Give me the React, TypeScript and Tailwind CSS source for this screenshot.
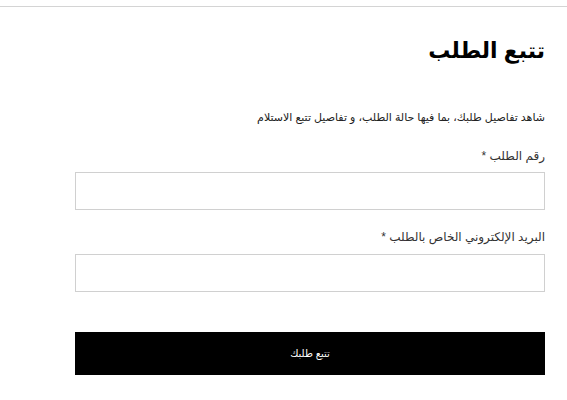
export default function App() {
  return (
    <div
      dir="rtl"
      className="min-h-[400px] bg-white text-black"
      style={{ fontFamily: '"Liberation Sans", "DejaVu Sans", sans-serif' }}
    >
      <div className="h-[6px]" />
      <div className="border-t border-[#d4d4d4]" />
      <div className="pr-[22px] pl-[75px]">
        <h1 className="mt-[24px] text-[22px] font-bold leading-[40px]">تتبع الطلب</h1>
        <p className="mt-[38px] text-[11px] leading-[16px] text-[#222]">
          شاهد تفاصيل طلبك، بما فيها حالة الطلب، و تفاصيل تتبع الاستلام
        </p>
        <form className="mt-[23px] flex flex-col">
          <label className="text-[12px] leading-[16px] text-[#333]">رقم الطلب *</label>
          <input className="mt-[8px] h-[38px] w-full border border-[#d0d0d0] bg-white outline-none" />
          <label className="mt-[19px] text-[12px] leading-[16px] text-[#333]">
            البريد الإلكتروني الخاص بالطلب *
          </label>
          <input className="mt-[9px] h-[38px] w-full border border-[#d0d0d0] bg-white outline-none" />
          <button
            type="button"
            className="mt-[40px] h-[43px] w-full bg-black text-[10px] text-white"
          >
            تتبع طلبك
          </button>
        </form>
      </div>
    </div>
  );
}
